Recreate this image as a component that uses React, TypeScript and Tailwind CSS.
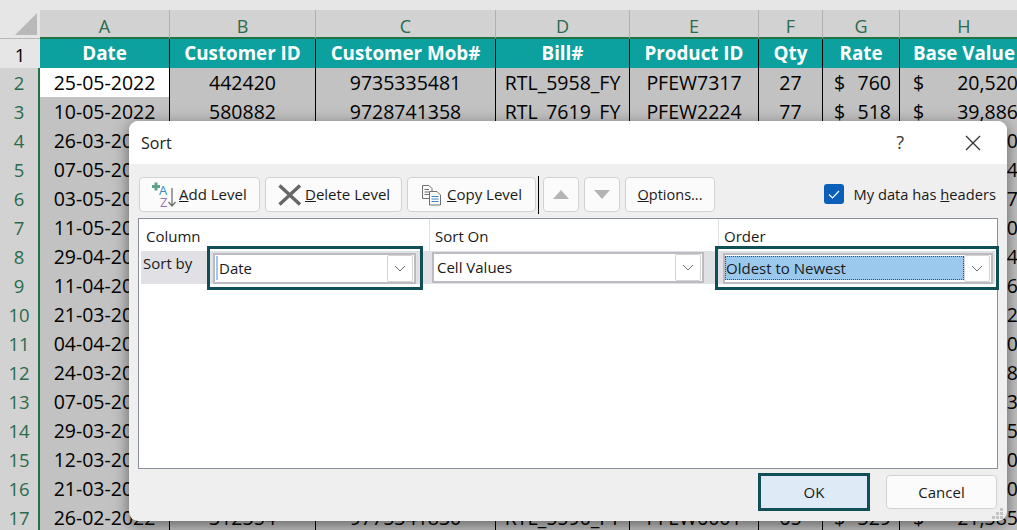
const rows = [
  ['25-05-2022', '442420', '9735335481', 'RTL_5958_FY', 'PFEW7317', '27', '760', '20,520'],
  ['10-05-2022', '580882', '9728741358', 'RTL_7619_FY', 'PFEW2224', '77', '518', '39,886'],
  ['26-03-2022', '', '', '', '', '', '', '18,900'],
  ['07-05-2022', '', '', '', '', '', '', '26,124'],
  ['03-05-2022', '', '', '', '', '', '', '31,457'],
  ['11-05-2022', '', '', '', '', '', '', '12,840'],
  ['29-04-2022', '', '', '', '', '', '', '44,154'],
  ['11-04-2022', '', '', '', '', '', '', '27,846'],
  ['21-03-2022', '', '', '', '', '', '', '19,332'],
  ['04-04-2022', '', '', '', '', '', '', '35,230'],
  ['24-03-2022', '', '', '', '', '', '', '16,248'],
  ['07-05-2022', '', '', '', '', '', '', '22,563'],
  ['29-03-2022', '', '', '', '', '', '', '41,835'],
  ['12-03-2022', '', '', '', '', '', '', '13,510'],
  ['21-03-2022', '', '', '', '', '', '', '29,730'],
  ['26-02-2022', '312354', '9775341830', 'RTL_5590_FY', 'PFEW6001', '65', '329', '21,385'],
];

const letters = ['A', 'B', 'C', 'D', 'E', 'F', 'G', 'H'];
const headers = ['Date', 'Customer ID', 'Customer Mob#', 'Bill#', 'Product ID', 'Qty', 'Rate', 'Base Value'];
const gridCols = 'grid grid-cols-[40px_130px_146px_180px_134px_129px_64px_77px_129px]';

function Sheet() {
  return (
    <div className="text-[19.5px] text-black">
      <div className="h-[10px] bg-[#e6e6e6]" />
      <div className={`${gridCols} h-[29px]`}>
        <div className="relative bg-[#e6e6e6] border-b border-[#b8b8b8]">
          <svg className="absolute right-[3px] bottom-[3px]" width="22" height="22" viewBox="0 0 22 22">
            <path d="M0 22 L22 0 V22 Z" fill="#b9b9b9" />
          </svg>
        </div>
        {letters.map((l) => (
          <div key={l} className="flex items-center justify-center bg-[#d2d2d2] border-r border-[#b0b0b0] border-b-2 border-b-[#217346] text-[#2a6b4c] text-[18px] leading-none pt-[5px]">
            {l}
          </div>
        ))}
      </div>
      <div className={`${gridCols} h-[29px]`}>
        <div className="flex items-center justify-center bg-[#e6e6e6] border-b border-[#b8b8b8] text-[18.5px] pt-[2px]">1</div>
        {headers.map((h) => (
          <div key={h} className="flex items-center justify-center bg-[#0ca09f] border-r border-black border-b-2 border-b-[#217346] text-white font-bold text-[18.8px] whitespace-nowrap overflow-hidden">
            {h}
          </div>
        ))}
      </div>
      <div>
        {rows.map((r, i) => (
          <div key={i} className={`${gridCols} h-[29px]`}>
            <div className="flex items-center justify-center pb-[2px] bg-[#d2d2d2] border-r-2 border-[#217346] border-b border-b-[#b0b0b0] text-[#2a6b4c] text-[18.5px]">
              {i + 2}
            </div>
            <div className={`flex items-center justify-center pb-[2px] border-r border-b border-black whitespace-nowrap ${i === 0 ? 'bg-white' : 'bg-[#c2c2c2]'}`}>{r[0]}</div>
            <div className="flex items-center justify-center pb-[2px] bg-[#c2c2c2] border-r border-b border-black">{r[1]}</div>
            <div className="flex items-center justify-center pb-[2px] bg-[#c2c2c2] border-r border-b border-black">{r[2]}</div>
            <div className="flex items-center justify-center pb-[2px] bg-[#c2c2c2] border-r border-b border-black whitespace-nowrap">{r[3]}</div>
            <div className="flex items-center justify-center pb-[2px] bg-[#c2c2c2] border-r border-b border-black">{r[4]}</div>
            <div className="flex items-center justify-center pb-[2px] bg-[#c2c2c2] border-r border-b border-black">{r[5]}</div>
            <div className="flex items-center justify-between pb-[2px] bg-[#c2c2c2] border-r border-b border-black pl-[11px] pr-[8px]">
              {r[6] && <span>$</span>}
              <span>{r[6]}</span>
            </div>
            <div className="flex items-center justify-between pb-[2px] bg-[#c2c2c2] border-b border-black pl-[13px] pr-[11px] whitespace-nowrap">
              <span>$</span>
              <span>{r[7]}</span>
            </div>
          </div>
        ))}
      </div>
    </div>
  );
}

function Btn({ className, children }: { className: string; children: React.ReactNode }) {
  return (
    <div className={`flex items-center h-[35px] bg-[#fbfbfb] border border-[#d2d2d2] rounded-[4px] text-[#1a1a1a] ${className}`}>
      {children}
    </div>
  );
}

function Chevron({ className = '' }: { className?: string }) {
  return (
    <div className={`flex items-center justify-center w-[26px] h-[27px] bg-white border border-[#d4d4d4] rounded-[2px] shrink-0 ${className}`}>
      <svg width="12" height="7" viewBox="0 0 12 7" fill="none" stroke="#6e6e6e" strokeWidth="1">
        <path d="M1 1 L6 6 L11 1" />
      </svg>
    </div>
  );
}

function SortIcon() {
  return (
    <svg width="26" height="28" viewBox="0 0 26 28" className="shrink-0">
      <path d="M1 5.5 H9 M5 1.5 V9.5" stroke="#5aa58a" strokeWidth="3" />
      <text x="8" y="14" fontSize="13" fill="#3f86c9" fontFamily="Open Sans, sans-serif">A</text>
      <text x="9" y="26" fontSize="13" fill="#9a6fb8" fontFamily="Open Sans, sans-serif">Z</text>
      <path d="M21 7 V25 M17.5 21 L21 25 L24.5 21" fill="none" stroke="#707070" strokeWidth="1.3" />
    </svg>
  );
}

function CopyIcon() {
  return (
    <svg width="21" height="22" viewBox="0 0 21 22" fill="none" className="shrink-0">
      <path d="M1.5 1.5 H8 L11 4.5 V14.5 H1.5 Z" fill="#fbfbfb" stroke="#707070" />
      <path d="M3.5 5.5 H8 M3.5 8 H9 M3.5 10.5 H9" stroke="#707070" />
      <path d="M8.5 7.5 H16 L19.5 11 V21 H8.5 Z" fill="#fbfbfb" stroke="#707070" />
      <path d="M10.5 12.5 H17.5 M10.5 15 H17.5 M10.5 17.5 H17.5" stroke="#3f86c9" />
    </svg>
  );
}

function Dialog() {
  return (
    <div className="absolute left-[129px] top-[121px] w-[878px] h-[400px] rounded-[9px] overflow-hidden bg-[#efefef] shadow-[0_4px_16px_rgba(0,0,0,0.5)] text-[15px] text-[#1a1a1a] flex flex-col">
      <div className="h-[43px] bg-white flex items-center justify-between pl-[12px] pr-[26px] shrink-0">
        <span className="text-[16px] text-[#222]">Sort</span>
        <div className="flex items-center gap-[61px]">
          <span className="text-[18px] text-[#333]">?</span>
          <svg width="16" height="16" viewBox="0 0 16 16" stroke="#333" strokeWidth="1.3">
            <path d="M1 1 L15 15 M15 1 L1 15" />
          </svg>
        </div>
      </div>

      <div className="flex flex-col flex-1 px-[9px] pt-[13px]">
        <div className="flex items-center h-[35px] pl-[1px]">
          <Btn className="w-[121px] pl-[11px]">
            <SortIcon />
            <span className="ml-[2px]"><span className="underline">A</span>dd Level</span>
          </Btn>
          <Btn className="w-[137px] ml-[5px] pl-[12px]">
            <svg width="24" height="22" viewBox="0 0 24 22" stroke="#666" strokeWidth="3.4" className="shrink-0">
              <path d="M1.5 1.5 L22 20.5 M22 1.5 L1.5 20.5" />
            </svg>
            <span className="ml-[3px]"><span className="underline">D</span>elete Level</span>
          </Btn>
          <Btn className="w-[129px] ml-[5px] pl-[13px]">
            <CopyIcon />
            <span className="ml-[5px]"><span className="underline">C</span>opy Level</span>
          </Btn>
          <div className="w-px h-[38px] bg-black ml-[2px]" />
          <Btn className="w-[36px] ml-[4px] justify-center">
            <svg width="16" height="9" viewBox="0 0 16 9"><path d="M8 0 L16 9 H0 Z" fill="#b4b4b4" /></svg>
          </Btn>
          <Btn className="w-[36px] ml-[5px] justify-center">
            <svg width="16" height="9" viewBox="0 0 16 9"><path d="M0 0 H16 L8 9 Z" fill="#b4b4b4" /></svg>
          </Btn>
          <Btn className="w-[90px] ml-[5px] justify-center text-[14.5px]">
            <span><span className="underline">O</span>ptions...</span>
          </Btn>
          <div className="ml-auto flex items-center">
            <div className="flex items-center justify-center w-[20px] h-[20px] rounded-[3px] bg-[#0a5fb8]">
              <svg width="12" height="9" viewBox="0 0 12 9" fill="none" stroke="#fff" strokeWidth="1.2">
                <path d="M1 4.5 L4.5 8 L11 1" />
              </svg>
            </div>
            <span className="ml-[10px] mr-[2px] whitespace-nowrap text-[14.7px]">My data has <span className="underline">h</span>eaders</span>
          </div>
        </div>

        <div className="mt-[6px] h-[251px] bg-white border border-[#8a8f9c] flex flex-col">
          <div className="flex h-[32px] shrink-0">
            <div className="w-[291px] pl-[7px] pt-[6px] border-r border-[#e2e2e2]">Column</div>
            <div className="w-[289px] pl-[5px] pt-[6px] border-r border-[#e2e2e2]">Sort On</div>
            <div className="flex-1 pl-[5px] pt-[6px]">Order</div>
          </div>
          <div className="flex items-center h-[33px] w-[854px] ml-[2px] bg-[#e0e0e5]">
            <span className="w-[66px] shrink-0 pl-[2px] -mt-[8px]">Sort by</span>
            <div className="w-[216px] h-[44px] -my-[6px] border-[3px] border-[#0f4f55] pl-[3px] pt-[4px] shrink-0 relative">
              <div className="flex items-center justify-between w-[203px] h-[31px] bg-white border-2 border-[#bcbcc0] pr-[1px]">
                <div className="flex items-center h-[24px] ml-[1px]">
                  <div className="w-[2px] h-[24px] bg-[#9bc9ee]" />
                  <span className="ml-[1px]">Date</span>
                </div>
                <Chevron />
              </div>
            </div>
            <div className="flex items-center justify-between w-[272px] h-[31px] ml-[9px] -mt-[1px] bg-white border-2 border-[#bcbcc0] pl-[3px] pr-[1px] shrink-0">
              <span>Cell Values</span>
              <Chevron />
            </div>
            <div className="w-[284px] h-[44px] -my-[6px] ml-[11px] border-[3px] border-[#0f4f55] pl-[5px] pt-[4px] shrink-0 relative">
              <div className="flex items-center justify-between w-[270px] h-[31px] bg-white border-2 border-[#bcbcc0] pr-[1px]">
                <div className="flex items-center w-[240px] h-[24px] bg-[#9bc9ee] border border-dotted border-[#2f4f6f]">
                  Oldest to Newest
                </div>
                <Chevron />
              </div>
            </div>
          </div>
        </div>

        <div className="flex items-center justify-end h-[38px] mt-[4px] pr-[1px]">
          <div className="flex items-center justify-center w-[112px] h-[38px] pt-[1px] bg-[#deebf7] border-[3px] border-[#0f4f55]">OK</div>
          <div className="flex items-center justify-center w-[111px] h-[34px] pt-[1px] ml-[16px] bg-[#fbfbfb] border border-[#d2d2d2] rounded-[4px]">Cancel</div>
        </div>
      </div>

      <svg className="absolute right-[3px] bottom-[1px]" width="12" height="12" viewBox="0 0 12 12" fill="#c4c4c4">
        <rect x="8" y="0" width="3" height="3" />
        <rect x="4" y="4" width="3" height="3" />
        <rect x="8" y="4" width="3" height="3" />
        <rect x="0" y="8" width="3" height="3" />
        <rect x="4" y="8" width="3" height="3" />
        <rect x="8" y="8" width="3" height="3" />
      </svg>
    </div>
  );
}

export default function App() {
  return (
    <div className="relative w-[1017px] h-[530px] overflow-hidden bg-[#c2c2c2] font-['Open_Sans',sans-serif]">
      <Sheet />
      <Dialog />
    </div>
  );
}
